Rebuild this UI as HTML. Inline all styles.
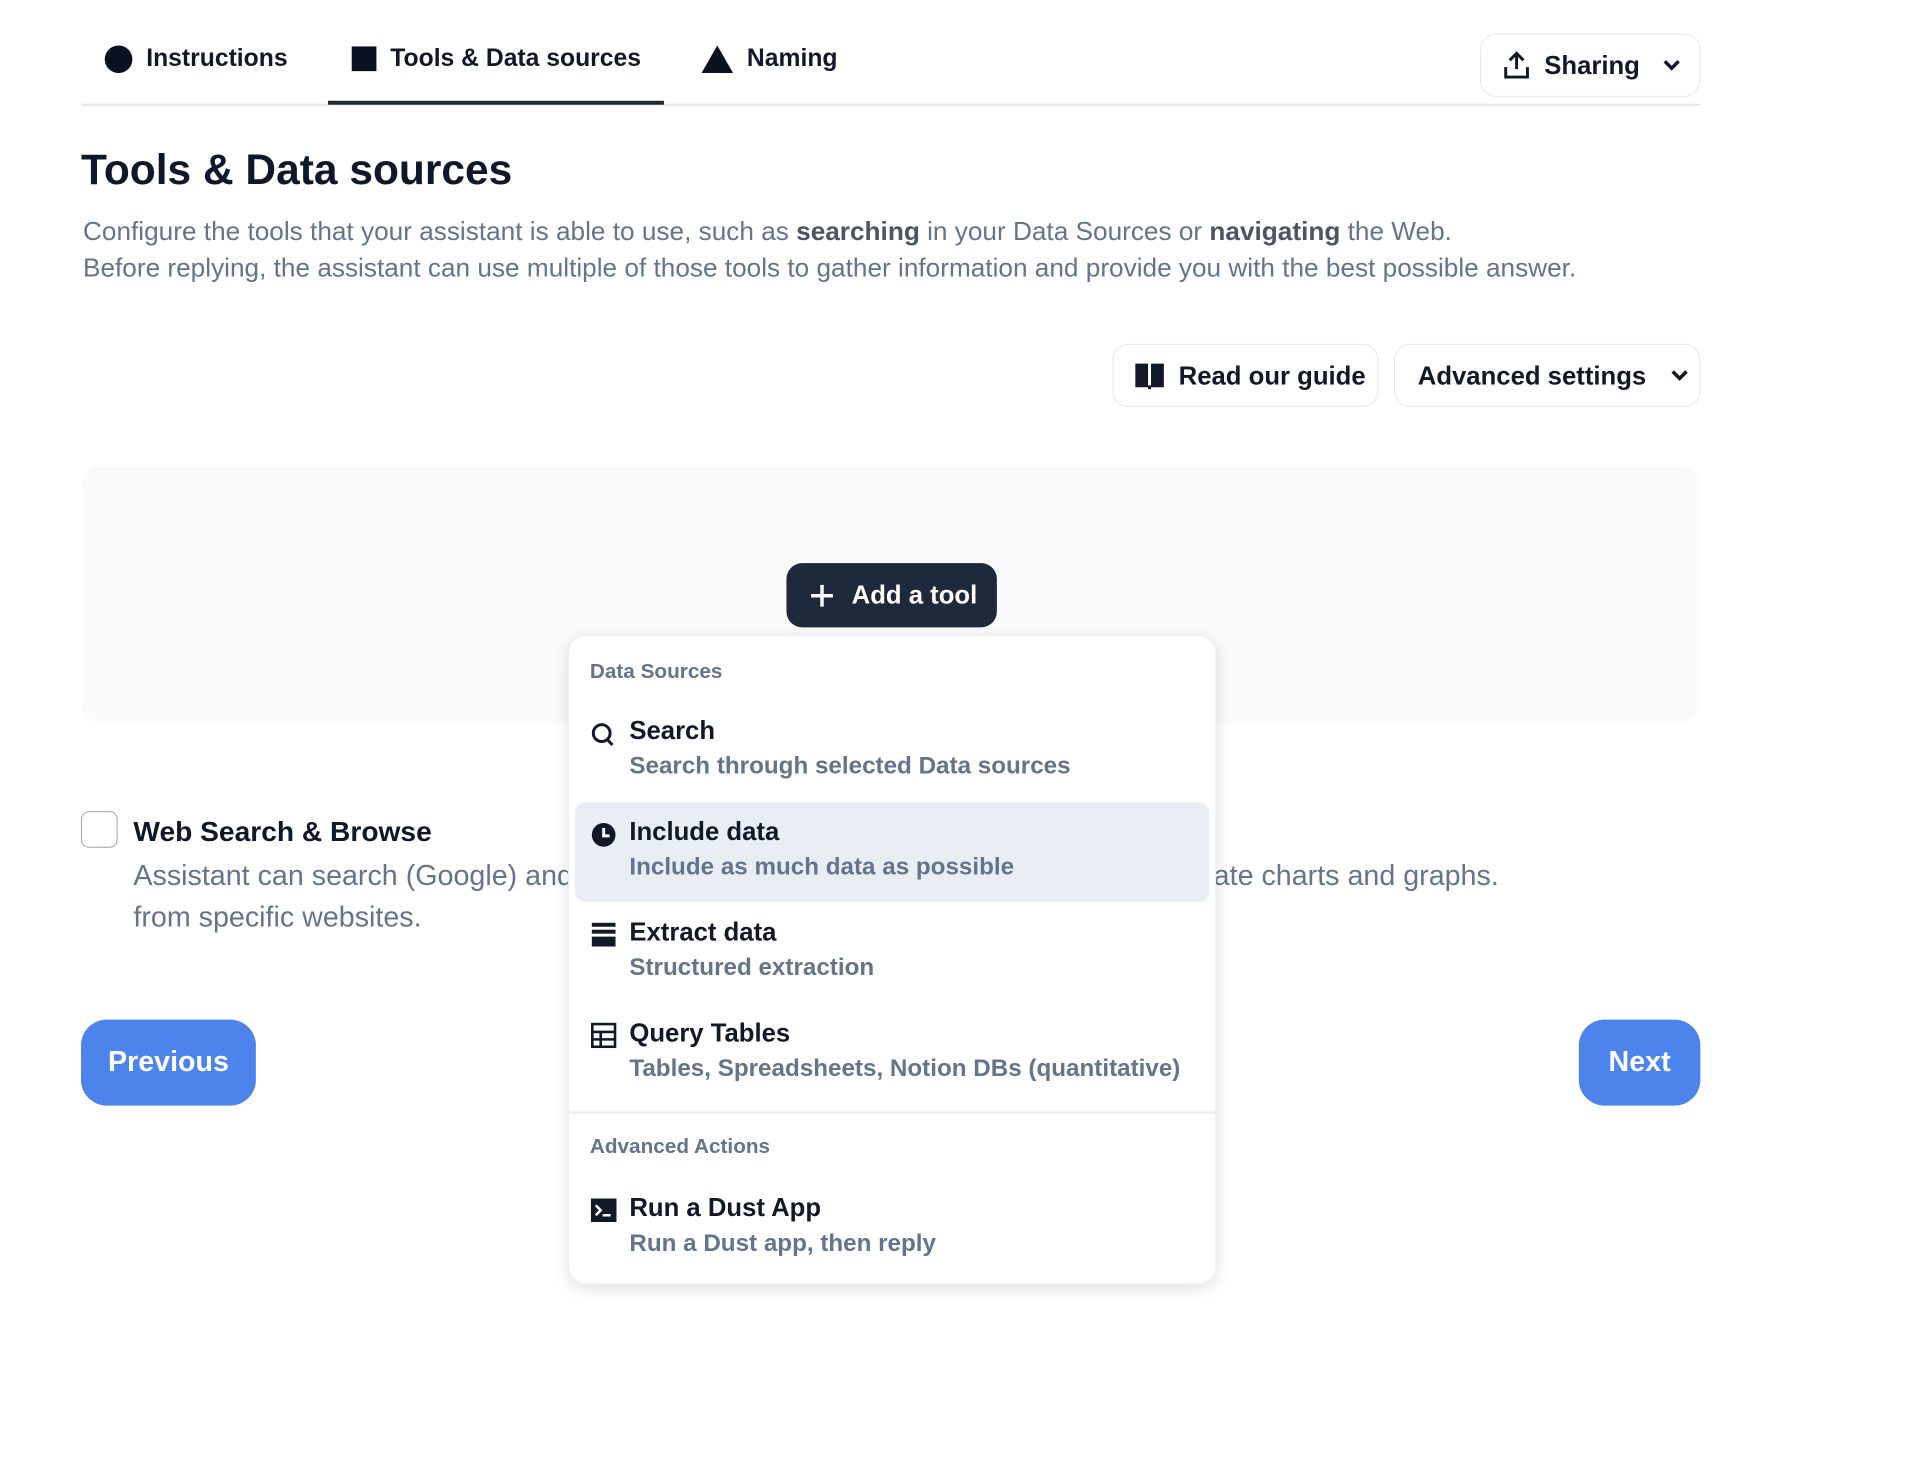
<!DOCTYPE html>
<html><head><meta charset="utf-8"><style>
*{box-sizing:border-box;margin:0;padding:0}
body{width:1908px;height:1458px;background:#fff;font-family:"Liberation Sans",sans-serif;position:relative;overflow:hidden;color:#111827}
#w{position:absolute;left:0;top:0;width:1908px;height:1458px;transform:scale(0.988);transform-origin:0 0}
.a{position:absolute;white-space:nowrap}
.tab{font-size:25px;font-weight:600;color:#111827;top:45px;display:flex;align-items:center;gap:14px}
.btn{position:absolute;border:1px solid #e5e7eb;border-radius:16px;display:flex;align-items:center;font-size:26px;font-weight:600;color:#111827;background:#fff}
.title{font-size:26px;font-weight:600;color:#111827}
.sub{font-size:24.5px;font-weight:600;color:#64748b}
.ic{position:absolute;left:22px}
</style></head><body><div id="w">
<div class="a tab" style="left:106px"><span style="width:28px;height:28px;border-radius:50%;background:#0b1120;display:inline-block"></span>Instructions</div>
<div class="a tab" style="left:356px"><span style="width:25px;height:25px;background:#0b1120;display:inline-block"></span>Tools &amp; Data sources</div>
<div class="a tab" style="left:710px"><svg width="32" height="28"><polygon points="16,0 32,28 0,28" fill="#0b1120"/></svg>Naming</div>
<div class="a" style="left:82px;top:105px;width:1639px;height:2px;background:#e5e7eb"></div>
<div class="a" style="left:332px;top:102px;width:340px;height:4px;background:#1f2937"></div>
<div class="btn" style="left:1498px;top:34px;width:223px;height:64px;padding-left:22px">
<svg width="28" height="30" viewBox="0 0 28 30" fill="none" stroke="#111827" stroke-width="3"><path d="M14 3v16M7 10l7-7 7 7M3 17v10h22V17"/></svg>
<span style="margin-left:14px">Sharing</span>
<svg style="margin-left:22px" width="20" height="14" viewBox="0 0 20 14" fill="none" stroke="#111827" stroke-width="3.5"><path d="M3 3l7 7 7-7"/></svg></div>
<div class="a" style="left:82px;top:148px;font-size:43px;font-weight:700;color:#0f172a">Tools &amp; Data sources</div>
<div class="a" style="left:84px;top:216px;font-size:26.5px;color:#64748b;line-height:37px">Configure the tools that your assistant is able to use, such as <b style="color:#4b5563">searching</b> in your Data Sources or <b style="color:#4b5563">navigating</b> the Web.<br>Before replying, the assistant can use multiple of those tools to gather information and provide you with the best possible answer.</div>
<div class="btn" style="left:1126px;top:348px;width:269px;height:64px;padding-left:22px">
<svg width="30" height="28" viewBox="0 0 30 28"><path d="M0 2h13v24H0zM16 2h13v24H16z" fill="#111827"/><path d="M13 24h3v4h-3z" fill="#111827"/></svg>
<span style="margin-left:14px">Read our guide</span></div>
<div class="btn" style="left:1411px;top:348px;width:310px;height:64px;padding-left:23px">
<span>Advanced settings</span>
<svg style="margin-left:24px" width="20" height="14" viewBox="0 0 20 14" fill="none" stroke="#111827" stroke-width="3.5"><path d="M3 3l7 7 7-7"/></svg></div>
<div class="a" style="left:82px;top:471px;width:1639px;height:261px;background:#f8fafc;border-radius:22px"></div>
<div class="a" style="left:796px;top:570px;width:213px;height:65px;background:#1e293b;border-radius:16px;color:#fff;font-size:26px;font-weight:600;display:flex;align-items:center;padding-left:24px">
<svg width="24" height="24" viewBox="0 0 24 24" stroke="#fff" stroke-width="3.5"><path d="M12 1v22M1 12h22"/></svg><span style="margin-left:18px">Add a tool</span></div>
<div class="a" style="left:82px;top:821px;width:37px;height:37px;border:1.5px solid #9ca3af;border-radius:8px"></div>
<div class="a" style="left:135px;top:826px;font-size:28.5px;font-weight:700;color:#0f172a">Web Search &amp; Browse</div>
<div class="a" style="left:135px;top:866px;font-size:29px;color:#64748b;line-height:42px">Assistant can search (Google) and retrieve information<br>from specific websites.</div>
<div class="a" style="right:391px;top:866px;font-size:29px;color:#64748b;line-height:42px">Assistant can generate charts and graphs.</div>
<div class="a" style="left:82px;top:1032px;width:177px;height:87px;background:#4c84ec;border-radius:26px;color:#fff;font-size:29px;font-weight:600;display:flex;align-items:center;justify-content:center">Previous</div>
<div class="a" style="left:1598px;top:1032px;width:123px;height:87px;background:#4c84ec;border-radius:26px;color:#fff;font-size:29px;font-weight:600;display:flex;align-items:center;justify-content:center">Next</div>
<div class="a" style="left:575px;top:643px;width:656px;height:657px;background:#fff;border-radius:18px;box-shadow:0 4px 16px rgba(0,0,0,.12);border:1px solid #eef0f3">
<div class="a" style="left:21px;top:24px;font-size:21px;font-weight:600;color:#64748b">Data Sources</div>
<div class="a" style="left:0;top:80px;width:654px;height:100px">
<svg class="ic" style="top:6px" width="26" height="28" viewBox="0 0 26 28" fill="none" stroke="#111827" stroke-width="3"><circle cx="11" cy="12" r="8.5"/><path d="M17 19l5 5"/></svg>
<div class="a title" style="left:61px;top:0">Search</div>
<div class="a sub" style="left:61px;top:38px">Search through selected Data sources</div></div>
<div class="a" style="left:6px;top:168px;width:642px;height:101px;background:#e9eef5;border-radius:10px"></div>
<div class="a" style="left:0;top:182px;width:654px;height:100px">
<svg class="ic" style="top:6px" width="26" height="26" viewBox="0 0 26 26"><circle cx="13" cy="13" r="12" fill="#111827"/><path d="M13 6v8h6" stroke="#fff" stroke-width="3" fill="none"/></svg>
<div class="a title" style="left:61px;top:0">Include data</div>
<div class="a sub" style="left:61px;top:38px">Include as much data as possible</div></div>
<div class="a" style="left:0;top:284px;width:654px;height:100px">
<svg class="ic" style="top:5px" width="26" height="26" viewBox="0 0 26 26" fill="#111827"><rect x="1" y="1" width="24" height="4"/><rect x="1" y="8" width="24" height="4"/><rect x="1" y="15" width="24" height="10"/></svg>
<div class="a title" style="left:61px;top:0">Extract data</div>
<div class="a sub" style="left:61px;top:38px">Structured extraction</div></div>
<div class="a" style="left:0;top:386px;width:654px;height:100px">
<svg class="ic" style="top:5px" width="26" height="26" viewBox="0 0 26 26" fill="none" stroke="#111827" stroke-width="2.6"><rect x="1.5" y="1.5" width="23" height="23"/><path d="M1.5 9.5h23M1.5 17h23M10 9.5v15"/></svg>
<div class="a title" style="left:61px;top:0">Query Tables</div>
<div class="a sub" style="left:61px;top:38px">Tables, Spreadsheets, Notion DBs (quantitative)</div></div>
<div class="a" style="left:0;top:481px;width:654px;height:2px;background:#e8ebef"></div>
<div class="a" style="left:21px;top:505px;font-size:21px;font-weight:600;color:#64748b">Advanced Actions</div>
<div class="a" style="left:0;top:563px;width:654px;height:100px">
<svg class="ic" style="top:6px" width="26" height="24" viewBox="0 0 26 24"><rect x="0" y="0" width="26" height="24" fill="#111827"/><path d="M5 7l5 5-5 5" stroke="#fff" stroke-width="2.5" fill="none"/><path d="M12 17h8" stroke="#fff" stroke-width="2.5"/></svg>
<div class="a title" style="left:61px;top:0">Run a Dust App</div>
<div class="a sub" style="left:61px;top:38px">Run a Dust app, then reply</div></div>
</div>
</div></body></html>
